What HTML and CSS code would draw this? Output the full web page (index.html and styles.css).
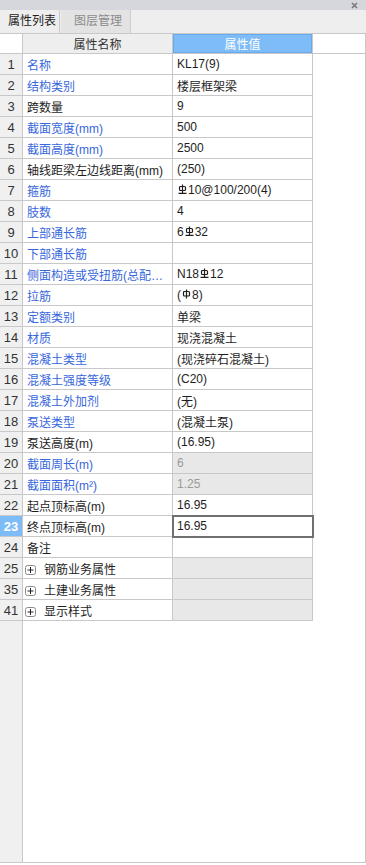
FILE: index.html
```html
<!DOCTYPE html>
<html lang="zh-CN">
<head>
    <meta charset="UTF-8">
    <title>属性列表</title>
    <link rel="stylesheet" href="styles.css">
</head>
<body>
    <svg class="defs" width="0" height="0">
        <defs>
            <symbol id="hrb" viewBox="0 0 9 10">
                <rect x="1.5" y="2.5" width="6" height="4" rx="1" fill="none" stroke="currentColor" stroke-width="1.2"/>
                <path d="M4.5 0.5V9.5M0.5 9.4H8.5" stroke="currentColor" stroke-width="1.2" fill="none"/>
            </symbol>
            <symbol id="hpb" viewBox="0 0 9 10">
                <rect x="1.5" y="2.5" width="6" height="4.5" rx="1" fill="none" stroke="currentColor" stroke-width="1.2"/>
                <path d="M4.5 0.5V9.5" stroke="currentColor" stroke-width="1.2" fill="none"/>
            </symbol>
            <symbol id="plus" viewBox="0 0 11 10">
                <rect x="0.5" y="0.5" width="10" height="9" rx="2" fill="#fff" stroke="#8a8a8a"/>
                <path d="M2.5 5H8.5M5.5 2V8" stroke="#222" stroke-width="1"/>
            </symbol>
        </defs>
    </svg>

    <div class="panel">
        <div class="titlebar">
            <svg class="close" width="7" height="7" viewBox="0 0 7 7"><path d="M1 1L6 6M6 1L1 6" stroke="#7a7a7a" stroke-width="1.6"/></svg>
        </div>
        <div class="tabs">
            <div class="tab active">属性列表</div>
            <div class="tab">图层管理</div>
        </div>
        <div class="sheet">
            <table class="props">
                <colgroup>
                    <col class="c-num"><col class="c-name"><col class="c-val"><col>
                </colgroup>
                <thead>
                    <tr>
                        <th class="corner"></th>
                        <th class="name-head">属性名称</th>
                        <th class="val-head">属性值</th>
                        <th class="fill"></th>
                    </tr>
                </thead>
                <tbody>
                    <tr><td class="num">1</td><td class="name link">名称</td><td class="val">KL17(9)</td><td class="fill"></td></tr>
                    <tr><td class="num">2</td><td class="name link">结构类别</td><td class="val">楼层框架梁</td><td class="fill"></td></tr>
                    <tr><td class="num">3</td><td class="name">跨数量</td><td class="val">9</td><td class="fill"></td></tr>
                    <tr><td class="num">4</td><td class="name link">截面宽度(mm)</td><td class="val">500</td><td class="fill"></td></tr>
                    <tr><td class="num">5</td><td class="name link">截面高度(mm)</td><td class="val">2500</td><td class="fill"></td></tr>
                    <tr><td class="num">6</td><td class="name">轴线距梁左边线距离(mm)</td><td class="val">(250)</td><td class="fill"></td></tr>
                    <tr><td class="num">7</td><td class="name link">箍筋</td><td class="val"><svg class="bar"><use href="#hrb"/></svg>10@100/200(4)</td><td class="fill"></td></tr>
                    <tr><td class="num">8</td><td class="name link">肢数</td><td class="val">4</td><td class="fill"></td></tr>
                    <tr><td class="num">9</td><td class="name link">上部通长筋</td><td class="val">6<svg class="bar"><use href="#hrb"/></svg>32</td><td class="fill"></td></tr>
                    <tr><td class="num">10</td><td class="name link">下部通长筋</td><td class="val"></td><td class="fill"></td></tr>
                    <tr><td class="num">11</td><td class="name link">侧面构造或受扭筋(总配筋值)</td><td class="val">N18<svg class="bar"><use href="#hrb"/></svg>12</td><td class="fill"></td></tr>
                    <tr><td class="num">12</td><td class="name link">拉筋</td><td class="val">(<svg class="bar"><use href="#hpb"/></svg>8)</td><td class="fill"></td></tr>
                    <tr><td class="num">13</td><td class="name link">定额类别</td><td class="val">单梁</td><td class="fill"></td></tr>
                    <tr><td class="num">14</td><td class="name link">材质</td><td class="val">现浇混凝土</td><td class="fill"></td></tr>
                    <tr><td class="num">15</td><td class="name link">混凝土类型</td><td class="val">(现浇碎石混凝土)</td><td class="fill"></td></tr>
                    <tr><td class="num">16</td><td class="name link">混凝土强度等级</td><td class="val">(C20)</td><td class="fill"></td></tr>
                    <tr><td class="num">17</td><td class="name link">混凝土外加剂</td><td class="val">(无)</td><td class="fill"></td></tr>
                    <tr><td class="num">18</td><td class="name link">泵送类型</td><td class="val">(混凝土泵)</td><td class="fill"></td></tr>
                    <tr><td class="num">19</td><td class="name">泵送高度(m)</td><td class="val">(16.95)</td><td class="fill"></td></tr>
                    <tr><td class="num">20</td><td class="name link">截面周长(m)</td><td class="val readonly">6</td><td class="fill"></td></tr>
                    <tr><td class="num">21</td><td class="name link">截面面积(m²)</td><td class="val readonly">1.25</td><td class="fill"></td></tr>
                    <tr><td class="num">22</td><td class="name">起点顶标高(m)</td><td class="val">16.95</td><td class="fill"></td></tr>
                    <tr class="current"><td class="num">23</td><td class="name">终点顶标高(m)</td><td class="val">16.95</td><td class="fill"></td></tr>
                    <tr><td class="num">24</td><td class="name">备注</td><td class="val"></td><td class="fill"></td></tr>
                    <tr class="group"><td class="num">25</td><td class="name"><svg class="expander"><use href="#plus"/></svg>钢筋业务属性</td><td class="val"></td><td class="fill"></td></tr>
                    <tr class="group"><td class="num">35</td><td class="name"><svg class="expander"><use href="#plus"/></svg>土建业务属性</td><td class="val"></td><td class="fill"></td></tr>
                    <tr class="group"><td class="num">41</td><td class="name"><svg class="expander"><use href="#plus"/></svg>显示样式</td><td class="val"></td><td class="fill"></td></tr>
                </tbody>
            </table>
        </div>
    </div>
</body>
</html>
```

FILE: styles.css
```css
body {
    margin: 0;
    font-family: "Liberation Sans", "Noto Sans CJK SC", sans-serif;
    font-size: 12px;
    color: #1e1e1e;
    background: #fff;
}
.defs {
    position: absolute;
    width: 0;
    height: 0;
}
.panel {
    width: 366px;
    height: 863px;
    display: flex;
    flex-direction: column;
}
.titlebar {
    height: 10px;
    background: #d6d7dc;
    display: flex;
    justify-content: flex-end;
    align-items: center;
    padding-right: 8px;
}
.tabs {
    height: 23px;
    display: flex;
    background: #eeeeee;
    border-bottom: 1px solid #c9c9c9;
}
.tab {
    padding: 0 8px 0 13px;
    line-height: 23px;
    font-size: 12px;
    color: #8c8c8c;
    background: #e3e3e3;
    border-right: 1px solid #cfcfcf;
    white-space: nowrap;
}
.tab.active {
    color: #222;
    background: #eeeeee;
    border-right: 1px solid #c9c9c9;
    margin-right: 1px;
    padding: 0 3px 0 8px;
}
.sheet {
    flex: 1;
    border-right: 1px solid #c8c8c8;
    border-bottom: 1px solid #c8c8c8;
    background: linear-gradient(to right, #f0f0f0 0 22px, #c8c8c8 22px 23px, #fff 23px);
}
.props {
    width: 365px;
    table-layout: fixed;
    border-collapse: separate;
    border-spacing: 0;
}
.c-num { width: 23px; }
.c-name { width: 150px; }
.c-val { width: 140px; }
.props thead tr { height: 20px; }
.props tbody tr { height: 21px; }
.props th,
.props td {
    padding: 0 4px;
    border-right: 1px solid #c8c8c8;
    border-bottom: 1px solid #c8c8c8;
    white-space: nowrap;
    overflow: hidden;
    text-overflow: ellipsis;
    font-weight: normal;
    text-align: left;
}
.props th {
    text-align: center;
    background: #eeeeee;
    color: #333;
}
.props th.corner {
    background: #fff;
}
.props th.val-head {
    background: #7ebcf8;
    color: #fff;
    box-shadow: inset 0 0 0 1px #66aaf0;
}
.props .fill {
    border-right: none;
    background: transparent;
}
.props td.fill {
    border-bottom: none;
    background: #fff;
}
.props td.num {
    padding: 0;
    text-align: center;
    font-size: 13px;
    color: #333;
    background: #f0f0f0;
}
.props td.name {
    background: #fff;
}
.props td.link {
    color: #3767dc;
}
.props td.val {
    background: #fff;
}
.props td.readonly {
    background: #e8e8e8;
    color: #9a9a9a;
}
.current td.num {
    background: #7ebcf8;
    color: #fff;
    font-weight: bold;
}
.current td.val {
    outline: 2px solid #707070;
    outline-offset: -1px;
}
.group td.name {
    padding-left: 2px;
}
.group td.val {
    background: #e8e8e8;
}
.expander {
    width: 11px;
    height: 10px;
    vertical-align: -1px;
    margin-right: 8px;
}
.bar {
    width: 9px;
    height: 10px;
    vertical-align: 0;
    margin: 0 1px;
}
```
